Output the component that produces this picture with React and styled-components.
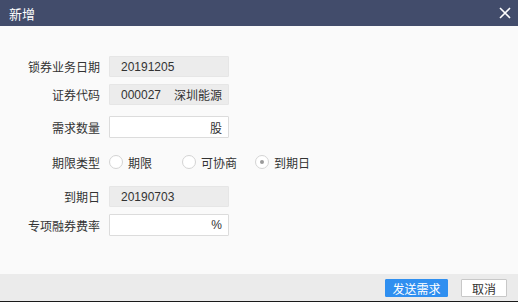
import styled, { createGlobalStyle } from "styled-components";

const GlobalStyle = createGlobalStyle`
  html, body {
    margin: 0;
    padding: 0;
    background: #fafafa;
  }
  body {
    font-family: "Liberation Sans", "Noto Sans CJK SC", sans-serif;
    font-size: 12px;
    color: #333;
  }
`;

const Dialog = styled.div`
  width: 518px;
  height: 302px;
  display: flex;
  flex-direction: column;
  background: #fafafa;
  border-bottom: 1px solid #1a1a1a;
  box-sizing: border-box;
`;

const Header = styled.div`
  height: 26px;
  background: #424c6b;
  color: #fff;
  display: flex;
  align-items: center;
  justify-content: space-between;
  padding: 0 6px 0 9px;
  font-size: 13px;
`;

const Close = styled.svg`
  width: 14px;
  height: 14px;
`;

const Body = styled.div`
  flex: 1;
  padding-top: 30px;
  display: flex;
  flex-direction: column;
`;

const Row = styled.div`
  display: flex;
  align-items: center;
  height: ${(p) => p.h || 21}px;
  margin-top: ${(p) => p.mt || 0}px;
`;

const Label = styled.div`
  width: 100px;
  text-align: right;
  margin-right: 9px;
  color: #333;
  font-size: 12px;
`;

const Field = styled.div`
  width: 120px;
  height: 100%;
  box-sizing: border-box;
  display: flex;
  align-items: center;
  justify-content: space-between;
  padding: 0 6px 0 11px;
  background: ${(p) => (p.disabled ? "#ececec" : "#fff")};
  border: 1px solid ${(p) => (p.disabled ? "#e6e6e6" : "#dcdcdc")};
  border-radius: 1px;
  color: #333;
`;

const Unit = styled.span`
  margin-left: auto;
`;

const Radio = styled.label`
  width: 73px;
  display: flex;
  align-items: center;
  gap: 5px;
  color: #333;
`;

const Circle = styled.span`
  width: 14px;
  height: 14px;
  box-sizing: border-box;
  border-radius: 50%;
  border: 1px solid #d4d4d4;
  background: #fff;
  display: flex;
  align-items: center;
  justify-content: center;
  &::after {
    content: "";
    width: 4px;
    height: 4px;
    border-radius: 50%;
    background: ${(p) => (p.checked ? "#9a9a9a" : "transparent")};
  }
`;

const Footer = styled.div`
  height: 27px;
  background: #ebebeb;
  display: flex;
  align-items: center;
  justify-content: flex-end;
  gap: 13px;
  padding-right: 11px;
`;

const Button = styled.button`
  height: 18px;
  width: ${(p) => p.w}px;
  padding: 0;
  font-family: inherit;
  font-size: 12px;
  border-radius: 1px;
  border: 1px solid ${(p) => (p.primary ? "#2f8ff0" : "#c8c8c8")};
  background: ${(p) => (p.primary ? "#2f8ff0" : "#fff")};
  color: ${(p) => (p.primary ? "#fff" : "#333")};
`;

const options = [
  { label: "期限", checked: false },
  { label: "可协商", checked: false },
  { label: "到期日", checked: true },
];

export default function App() {
  return (
    <>
      <GlobalStyle />
      <Dialog>
        <Header>
          <span>新增</span>
          <Close viewBox="0 0 14 14">
            <path d="M2 2 L12 12 M12 2 L2 12" stroke="#fff" strokeWidth="1.6" />
          </Close>
        </Header>
        <Body>
          <Row>
            <Label>锁券业务日期</Label>
            <Field disabled>20191205</Field>
          </Row>
          <Row mt={7}>
            <Label>证券代码</Label>
            <Field disabled>
              <span>000027</span>
              <span>深圳能源</span>
            </Field>
          </Row>
          <Row mt={11} h={22}>
            <Label>需求数量</Label>
            <Field>
              <Unit>股</Unit>
            </Field>
          </Row>
          <Row mt={13} h={22}>
            <Label>期限类型</Label>
            {options.map((o) => (
              <Radio key={o.label}>
                <Circle checked={o.checked} />
                {o.label}
              </Radio>
            ))}
          </Row>
          <Row mt={13}>
            <Label>到期日</Label>
            <Field disabled>20190703</Field>
          </Row>
          <Row mt={7} h={22}>
            <Label>专项融券费率</Label>
            <Field>
              <Unit>%</Unit>
            </Field>
          </Row>
        </Body>
        <Footer>
          <Button primary w={63}>发送需求</Button>
          <Button w={46}>取消</Button>
        </Footer>
      </Dialog>
    </>
  );
}
